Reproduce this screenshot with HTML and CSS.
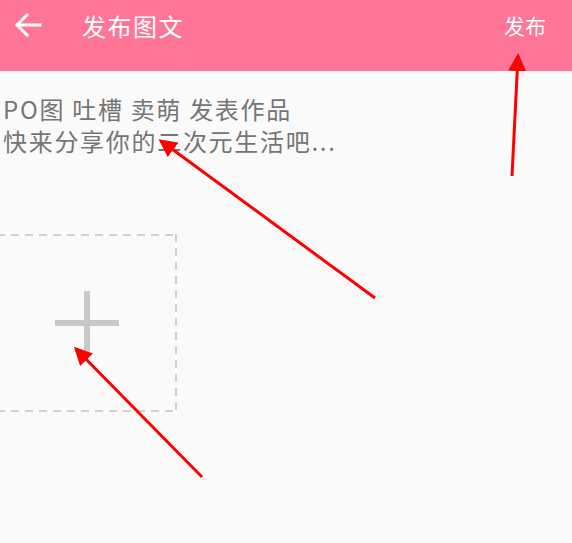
FILE: index.html
```html
<!DOCTYPE html>
<html lang="zh-CN">
<head>
    <meta charset="UTF-8">
    <meta name="viewport" content="width=device-width, initial-scale=1.0">
    <title>发布图文</title>
    <link rel="stylesheet" href="styles.css">
</head>
<body>
    <div class="page">
        <div class="toolbar">
            <svg class="back-icon" width="28" height="24" viewBox="0 0 28 24">
                <path d="M26 12 H3 M13 2 L3 12 L13 22" fill="none" stroke="#fff" stroke-width="3" stroke-linecap="square"/>
            </svg>
            <span class="toolbar-title">发布图文</span>
            <span class="toolbar-action">发布</span>
        </div>

        <div class="post-hint">
            PO图 吐槽 卖萌 发表作品<br>
            快来分享你的二次元生活吧...
        </div>

        <div class="add-image">
            <div class="plus"></div>
        </div>

        <svg class="notes" width="572" height="543" viewBox="0 0 572 543">
            <defs>
                <marker id="head" markerWidth="6" markerHeight="6" refX="5" refY="3" orient="auto" markerUnits="strokeWidth">
                    <path d="M0 0 L6 3 L0 6 Z" fill="#f00"/>
                </marker>
            </defs>
            <line x1="512" y1="176" x2="518" y2="56" stroke="#f00" stroke-width="3" marker-end="url(#head)"/>
            <line x1="375" y1="298" x2="161" y2="141" stroke="#f00" stroke-width="3" marker-end="url(#head)"/>
            <line x1="202" y1="477" x2="76" y2="349" stroke="#f00" stroke-width="3" marker-end="url(#head)"/>
        </svg>
    </div>
</body>
</html>
```

FILE: styles.css
```css
body {
    margin: 0;
    background-color: #fafafa;
    font-family: "Noto Sans CJK SC", "Noto Sans", sans-serif;
}
.page {
    position: relative;
    width: 572px;
    height: 543px;
    overflow: hidden;
}
.toolbar {
    display: flex;
    align-items: center;
    height: 50px;
    padding: 0 26px 21px 14px;
    background-color: #fe7597;
    color: white;
}
.back-icon {
    margin-right: 40px;
}
.toolbar-title {
    font-size: 24px;
    letter-spacing: 1.5px;
    flex: 1;
}
.toolbar-action {
    font-size: 21px;
}
.post-hint {
    padding: 22px 0 0 3px;
    font-size: 24px;
    line-height: 32px;
    letter-spacing: 1.7px;
    color: #757575;
}
/* dashed frame drawn with gradients to get long dashes */
.add-image {
    display: flex;
    align-items: center;
    justify-content: center;
    width: 180px;
    height: 178px;
    margin: 77px 0 0 -3px;
    background-image:
        repeating-linear-gradient(90deg, #d0d0d0 0 8px, transparent 8px 14px),
        repeating-linear-gradient(90deg, #d0d0d0 0 8px, transparent 8px 14px),
        repeating-linear-gradient(180deg, #d0d0d0 0 8px, transparent 8px 14px);
    background-size: 100% 2px, 100% 2px, 2px 100%;
    background-position: left top, left bottom, right top;
    background-repeat: no-repeat;
}
.plus {
    position: relative;
    width: 64px;
    height: 64px;
}
.plus::before,
.plus::after {
    content: "";
    position: absolute;
    background-color: #c8c8c8;
}
.plus::before {
    left: 0;
    top: 29px;
    width: 64px;
    height: 6px;
}
.plus::after {
    left: 29px;
    top: 0;
    width: 6px;
    height: 64px;
}
.notes {
    position: absolute;
    left: 0;
    top: 0;
    pointer-events: none;
}
```
